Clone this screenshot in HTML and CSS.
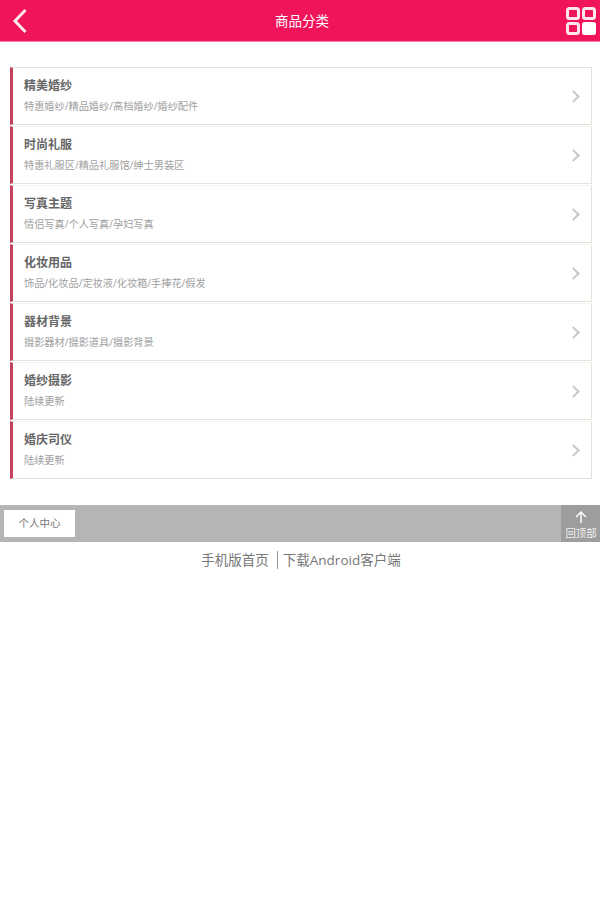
FILE: index.html
```html
<!DOCTYPE html>
<html lang="zh-CN">

<head>
    <meta charset="UTF-8">
    <meta name="viewport" content="width=device-width, initial-scale=1.0">
    <title>商品分类</title>
    <link rel="stylesheet" href="styles.css">
</head>

<body>
    <!-- Header -->
    <header class="top-bar">
        <a class="back-btn" href="#">
            <svg width="16" height="26" viewBox="0 0 16 26">
                <path d="M13.5 2 L3 13 L13.5 24" fill="none" stroke="#fde6ee" stroke-width="3" />
            </svg>
        </a>
        <h1>商品分类</h1>
        <a class="menu-btn" href="#">
            <svg width="30" height="28" viewBox="0 0 30 28">
                <rect x="1.5" y="1.5" width="11" height="10" rx="2" fill="none" stroke="#fde6ee" stroke-width="3" />
                <rect x="17.5" y="1.5" width="11" height="10" rx="2" fill="none" stroke="#fde6ee" stroke-width="3" />
                <rect x="1.5" y="16.5" width="11" height="10" rx="2" fill="none" stroke="#fde6ee" stroke-width="3" />
                <rect x="16" y="15" width="14" height="13" rx="2.5" fill="#fff" />
            </svg>
        </a>
    </header>

    <!-- Category list -->
    <ul class="cat-list">
        <li class="cat-item">
            <div class="cat-text">
                <h2>精美婚纱</h2>
                <p>特惠婚纱/精品婚纱/高档婚纱/婚纱配件</p>
            </div>
            <span class="arrow"></span>
        </li>
        <li class="cat-item">
            <div class="cat-text">
                <h2>时尚礼服</h2>
                <p>特惠礼服区/精品礼服馆/绅士男装区</p>
            </div>
            <span class="arrow"></span>
        </li>
        <li class="cat-item">
            <div class="cat-text">
                <h2>写真主题</h2>
                <p>情侣写真/个人写真/孕妇写真</p>
            </div>
            <span class="arrow"></span>
        </li>
        <li class="cat-item">
            <div class="cat-text">
                <h2>化妆用品</h2>
                <p>饰品/化妆品/定妆液/化妆箱/手捧花/假发</p>
            </div>
            <span class="arrow"></span>
        </li>
        <li class="cat-item">
            <div class="cat-text">
                <h2>器材背景</h2>
                <p>摄影器材/摄影道具/摄影背景</p>
            </div>
            <span class="arrow"></span>
        </li>
        <li class="cat-item">
            <div class="cat-text">
                <h2>婚纱摄影</h2>
                <p>陆续更新</p>
            </div>
            <span class="arrow"></span>
        </li>
        <li class="cat-item">
            <div class="cat-text">
                <h2>婚庆司仪</h2>
                <p>陆续更新</p>
            </div>
            <span class="arrow"></span>
        </li>
    </ul>

    <!-- Footer bar -->
    <div class="foot-bar">
        <a class="user-btn" href="#">个人中心</a>
        <a class="top-btn" href="#">
            <svg width="12" height="12" viewBox="0 0 12 12">
                <path d="M6 12 V1 M1 6 L6 1 L11 6" fill="none" stroke="#fff" stroke-width="1.4" />
            </svg>
            <span>回顶部</span>
        </a>
    </div>

    <div class="foot-links">
        <a href="#">手机版首页</a>
        <a class="android-link" href="#">下载Android客户端</a>
    </div>
</body>

</html>
```

FILE: styles.css
```css
body {
    font-family: "Open Sans", "Noto Sans CJK SC", sans-serif;
    background-color: #fff;
    color: #666;
    margin: 0;
    padding: 0;
}

a {
    color: inherit;
    text-decoration: none;
}

.top-bar {
    height: 41px;
    background-color: #f0145a;
    border-bottom: 1px solid #f580a5;
    display: flex;
    align-items: center;
    justify-content: space-between;
    padding: 0 4px 0 12px;
}

.top-bar h1 {
    margin: 0 0 0 10px;
    font-size: 13.5px;
    line-height: 18px;
    font-weight: normal;
    color: #fff;
}

.back-btn,
.menu-btn {
    display: flex;
}

.cat-list {
    list-style: none;
    margin: 25px 8px 0 10px;
    padding: 0;
}

.cat-item {
    height: 58px;
    margin-bottom: 1px;
    border: 1px solid #e4e2da;
    border-left: 3px solid #c5425c;
    display: flex;
    align-items: center;
    justify-content: space-between;
    padding: 0 13px 1px 11px;
    box-sizing: border-box;
}

.cat-item + .cat-item {
    border-top-color: #f5f4f0;
}

.cat-item h2 {
    margin: 0 0 6px;
    font-size: 12px;
    line-height: 15px;
    color: #666;
}

.cat-item p {
    margin: 0;
    font-size: 10.2px;
    line-height: 14px;
    color: #a0a0a0;
}

.arrow {
    width: 7px;
    height: 7px;
    margin-top: 2px;
    border-top: 2px solid #c8c8c8;
    border-right: 2px solid #c8c8c8;
    transform: rotate(45deg);
}

.foot-bar {
    height: 37px;
    margin-top: 26px;
    background-color: #b5b5b5;
    display: flex;
    align-items: center;
    justify-content: space-between;
    padding-left: 4px;
}

.user-btn {
    width: 71px;
    height: 27px;
    background-color: #fff;
    color: #777;
    font-size: 10.5px;
    line-height: 27px;
    text-align: center;
}

.top-btn {
    width: 39px;
    height: 37px;
    background-color: #9d9d9d;
    color: #f0f0f0;
    font-size: 10.4px;
    display: flex;
    flex-direction: column;
    align-items: center;
    gap: 4px;
    padding: 6px 0 0 1px;
    box-sizing: border-box;
}

.top-btn span {
    line-height: 13px;
}

.foot-links {
    display: flex;
    justify-content: center;
    margin-top: 9px;
    padding-left: 2px;
    font-size: 13.5px;
    line-height: 18px;
    color: #777;
}

.android-link {
    margin-left: 8px;
    padding-left: 5px;
    border-left: 1px solid #999;
}
```
